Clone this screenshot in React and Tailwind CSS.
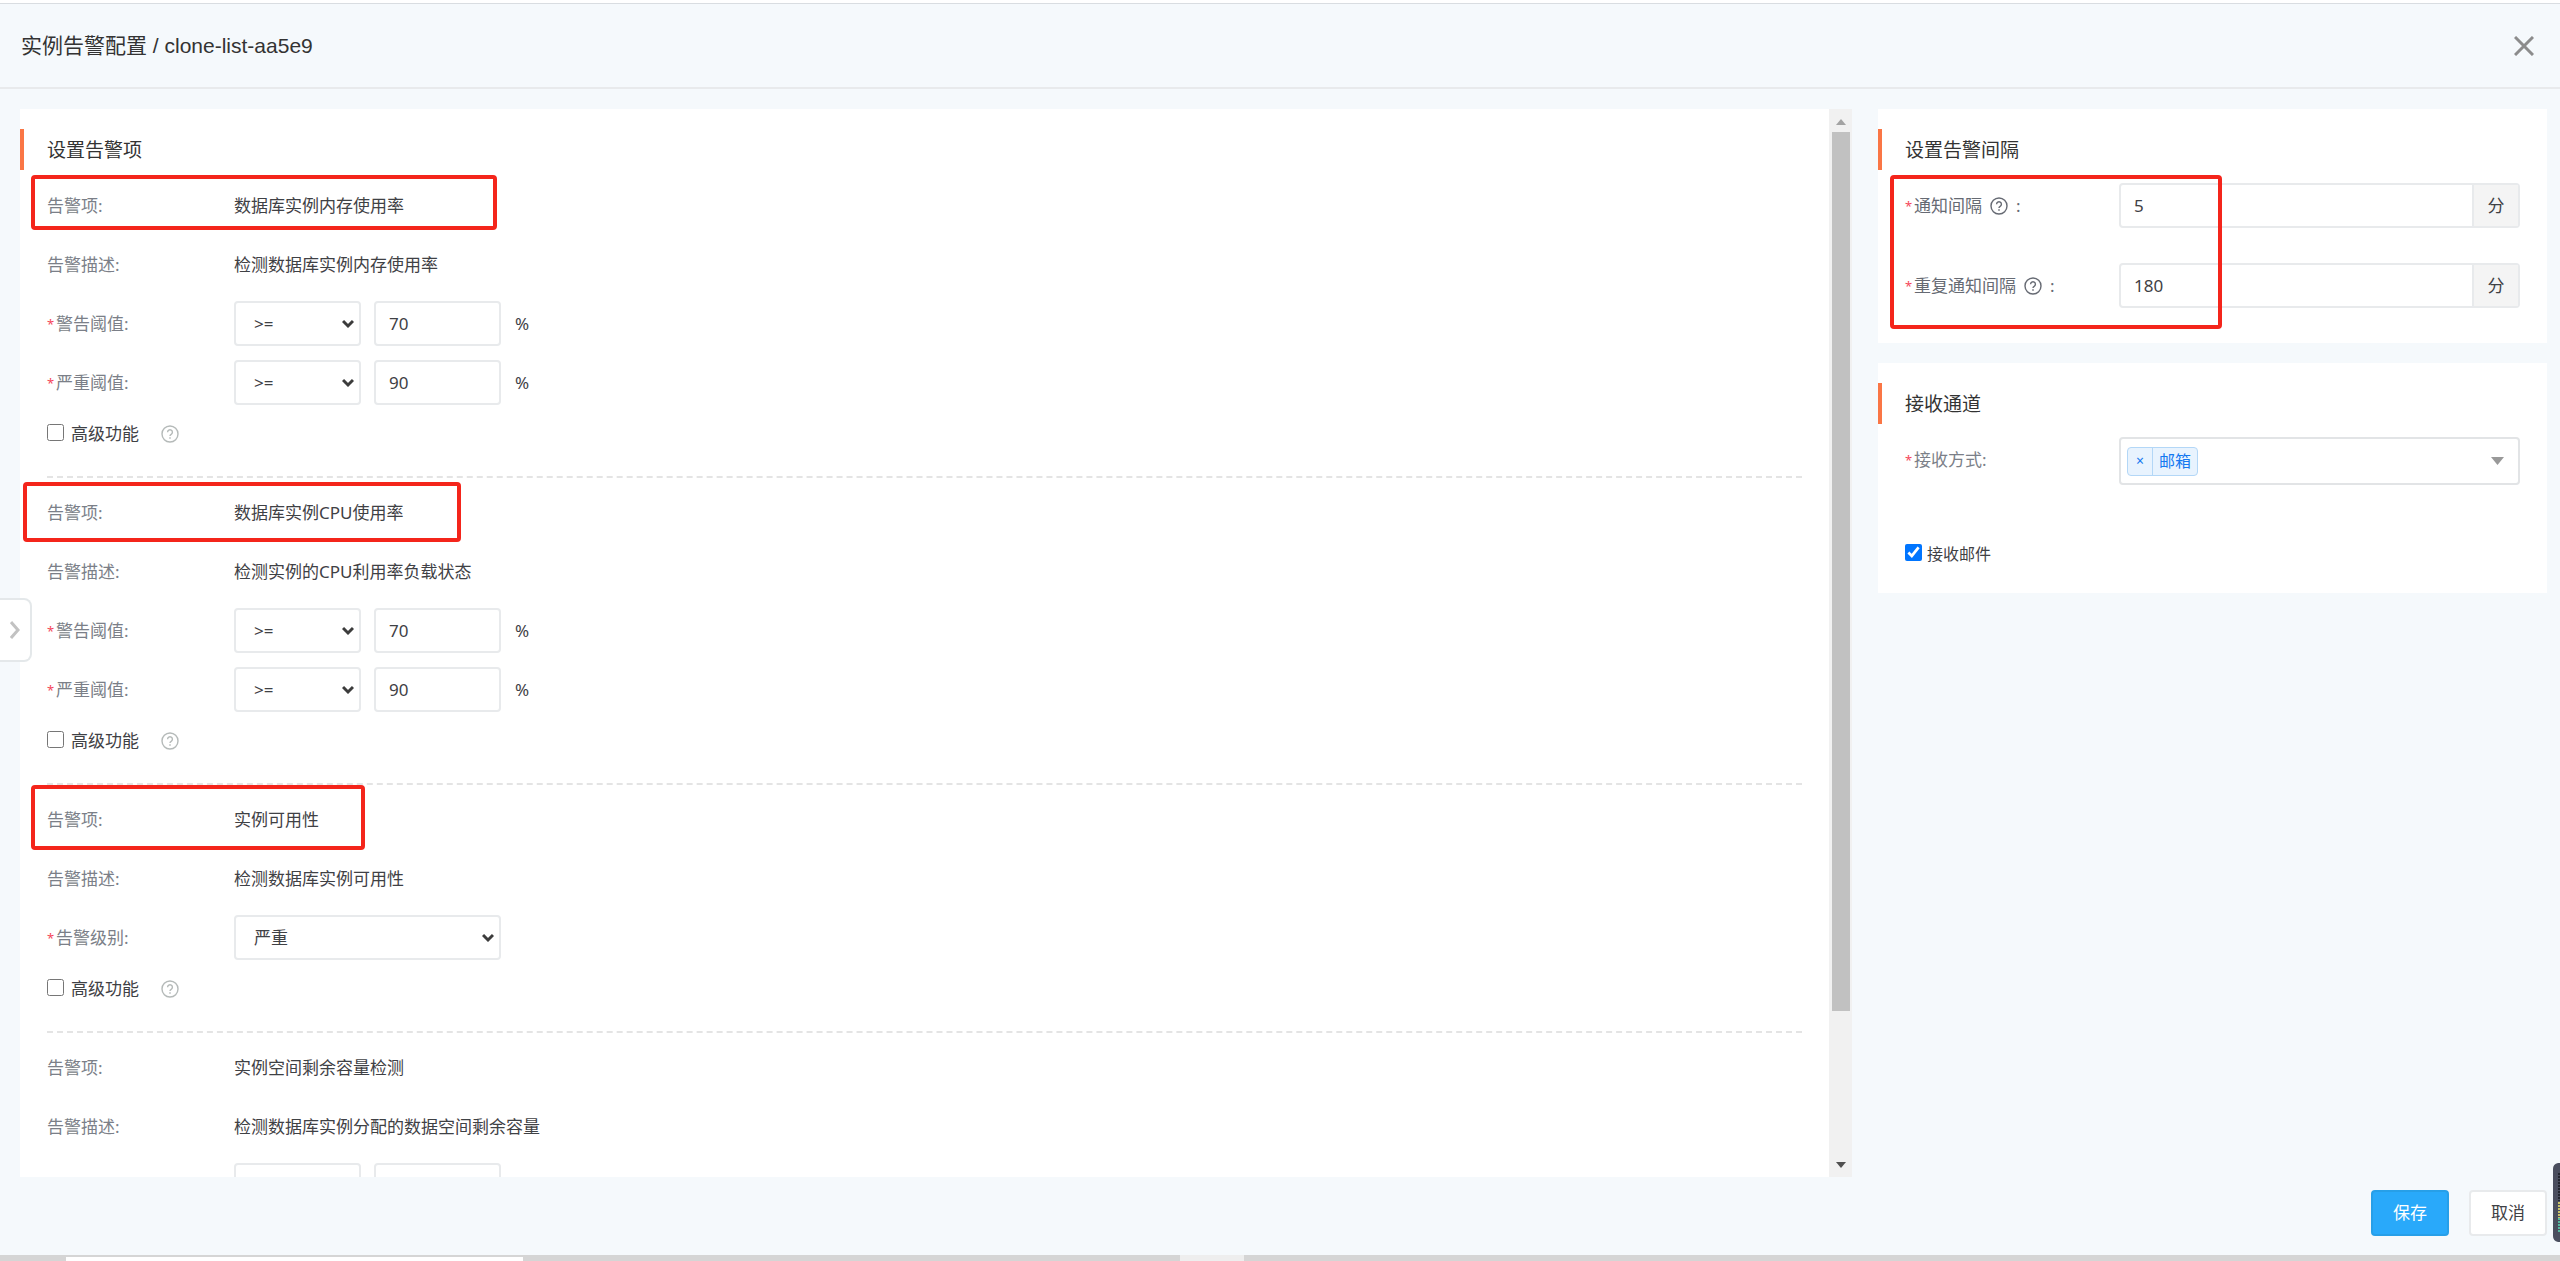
import { useState } from 'react'

const metrics = [
  {
    id: 'memory',
    name: '数据库实例内存使用率',
    desc: '检测数据库实例内存使用率',
    warning: '70',
    critical: '90',
    highlight: '-left-4 -top-2 w-[466px] h-[55px]',
  },
  {
    id: 'cpu',
    name: '数据库实例CPU使用率',
    desc: '检测实例的CPU利用率负载状态',
    warning: '70',
    critical: '90',
    highlight: '-left-6 -top-2 w-[438px] h-[60px]',
  },
  {
    id: 'availability',
    name: '实例可用性',
    desc: '检测数据库实例可用性',
    level: '严重',
    highlight: '-left-4 -top-3 w-[334px] h-[65px]',
  },
  {
    id: 'space',
    name: '实例空间剩余容量检测',
    desc: '检测数据库实例分配的数据空间剩余容量',
    warning: '20',
    critical: '10',
  },
]

function Highlight({ className }) {
  return <div className={`absolute z-10 rounded border-4 border-[#f4251b] pointer-events-none ${className}`} />
}

function HelpIcon({ className }) {
  return (
    <svg className={`w-[18px] h-[18px] shrink-0 ${className}`} viewBox="0 0 18 18" fill="none" stroke="currentColor">
      <circle cx="9" cy="9" r="8" strokeWidth="1.4" />
      <path d="M6.6 7.2a2.4 2.4 0 1 1 3.6 2.1c-.8.5-1.2.9-1.2 1.7" strokeWidth="1.4" />
      <path d="M9 12.2v1.6" strokeWidth="1.5" />
    </svg>
  )
}

function CardTitle({ children }) {
  return (
    <h2 className="h-[41px] mb-[13px] pl-[23px] border-l-4 border-[#fa7645] flex items-center text-[19px] text-[#333]">
      {children}
    </h2>
  )
}

function Required() {
  return <span className="w-[9px] text-[13px] text-[#f5475b]">*</span>
}

function Label({ htmlFor, required, children }) {
  return (
    <label htmlFor={htmlFor} className="w-[187px] shrink-0 flex items-center text-[#7b7f88]">
      {required && <Required />}
      {children}
    </label>
  )
}

function Select({ id, className, options, value, label }) {
  const [current, setCurrent] = useState(value)
  return (
    <div className={`relative h-[45px] ${className}`}>
      <select
        id={id}
        aria-label={label}
        value={current}
        onChange={(e) => setCurrent(e.target.value)}
        className="w-full h-full pl-[18px] appearance-none border-2 border-[#e8eaec] rounded-sm bg-white"
      >
        {options.map((o) => <option key={o}>{o}</option>)}
      </select>
      <svg className="absolute right-[7px] top-[18px] w-3 h-[10px] pointer-events-none" viewBox="0 0 12 10" fill="none" stroke="#3c3c3c" strokeWidth="3">
        <path d="M1 2l5 5 5-5" />
      </svg>
    </div>
  )
}

function ThresholdRow({ id, label, value }) {
  return (
    <div className="flex items-center h-[45px]">
      <Label htmlFor={id} required>{label}</Label>
      <Select id={`${id}-op`} label="比较条件" className="w-[127px] mr-[13px]" options={['>=', '<=']} value=">=" />
      <input id={id} defaultValue={value} className="w-[127px] h-[45px] px-[13px] mr-[14px] border-2 border-[#e8eaec] rounded-sm" />
      %
    </div>
  )
}

function MetricSection({ metric }) {
  return (
    <section className="relative mb-3 border-b-2 border-dashed border-[#e4e4e4] pb-[27px]">
      {metric.highlight && <Highlight className={metric.highlight} />}
      <div className="flex flex-col gap-[14px]">
        <div className="flex items-center h-[45px]">
          <Label>告警项:</Label>
          <span>{metric.name}</span>
        </div>
        <div className="flex items-center h-[45px]">
          <Label>告警描述:</Label>
          <span>{metric.desc}</span>
        </div>
        {metric.level ? (
          <div className="flex items-center h-[45px]">
            <Label htmlFor={`${metric.id}-level`} required>告警级别:</Label>
            <Select id={`${metric.id}-level`} className="w-[267px]" options={['严重', '警告']} value={metric.level} />
          </div>
        ) : (
          <>
            <ThresholdRow id={`${metric.id}-warning`} label="警告阈值:" value={metric.warning} />
            <ThresholdRow id={`${metric.id}-critical`} label="严重阈值:" value={metric.critical} />
          </>
        )}
        <div className="flex items-center h-[30px]">
          <label className="flex items-center gap-[7px]">
            <input type="checkbox" className="w-[17px] h-[17px] mb-1" />
            高级功能
          </label>
          <HelpIcon className="ml-[22px] text-[#b5bab9]" />
        </div>
      </div>
    </section>
  )
}

function IntervalRow({ id, label, value }) {
  return (
    <div className="flex items-center h-[45px]">
      <label htmlFor={id} className="w-[214px] shrink-0 flex items-center text-[#666a73]">
        <Required />
        {label}
        <HelpIcon className="mx-2" />
        :
      </label>
      <div className="flex flex-1 h-full border-2 border-[#e8eaec] rounded-sm">
        <input id={id} defaultValue={value} className="flex-1 min-w-0 px-[13px]" />
        <span className="w-[46px] flex items-center justify-center bg-[#f4f4f4] border-l-2 border-[#e8eaec]">分</span>
      </div>
    </div>
  )
}

function Scrollbar() {
  return (
    <div className="w-[23px] shrink-0 flex flex-col items-center bg-[#f1f1f1]">
      <svg className="w-[10px] h-[23px]" viewBox="0 0 10 23" fill="#a3a3a3"><path d="M5 10l5 6H0z" /></svg>
      <div className="flex-1 w-[18px]">
        <div className="w-full h-[86%] bg-[#c1c1c1]" />
      </div>
      <svg className="w-[10px] h-[23px]" viewBox="0 0 10 23" fill="#505050"><path d="M0 8h10l-5 6z" /></svg>
    </div>
  )
}

export default function App() {
  return (
    <div className="relative h-screen overflow-hidden flex flex-col bg-[#f5f9fc] text-[17px] leading-6 text-[#3f4145] font-['Noto_Sans','Noto_Sans_CJK_SC',sans-serif]">
      <div className="h-1 shrink-0 bg-white border-b border-[#d9dde1]" />
      <header className="h-[85px] shrink-0 flex items-center justify-between pl-[21px] pr-[26px] border-b-2 border-[#e8eaec]">
        <h1 className="text-[21px] text-[#333] font-['Liberation_Sans','Noto_Sans_CJK_SC',sans-serif]">实例告警配置 / clone-list-aa5e9</h1>
        <button aria-label="关闭">
          <svg className="w-5 h-5" viewBox="0 0 20 20" stroke="#8c8c8c" strokeWidth="3"><path d="M1 1l18 18M19 1L1 19" /></svg>
        </button>
      </header>

      <main className="flex-1 min-h-0 grid grid-cols-[1832fr_669fr] grid-rows-[minmax(0,1fr)] gap-[26px] pl-5 pr-[13px] pt-5">
        <div className="flex min-h-0 bg-white overflow-hidden">
          <div className="flex-1 min-w-0 overflow-hidden pt-5">
            <CardTitle>设置告警项</CardTitle>
            <div className="px-[27px]">
              {metrics.map((m) => <MetricSection key={m.id} metric={m} />)}
            </div>
          </div>
          <Scrollbar />
        </div>

        <div className="flex flex-col gap-5">
          <div className="bg-white pt-5 pb-[35px]">
            <CardTitle>设置告警间隔</CardTitle>
            <div className="relative px-[27px] flex flex-col gap-[35px]">
              <Highlight className="left-3 -top-2 w-[332px] h-[154px]" />
              <IntervalRow id="notify" label="通知间隔" value="5" />
              <IntervalRow id="repeat" label="重复通知间隔" value="180" />
            </div>
          </div>

          <div className="bg-white pt-5 pb-[27px]">
            <CardTitle>接收通道</CardTitle>
            <div className="px-[27px]">
              <div className="flex">
                <span className="w-[214px] h-[45px] shrink-0 flex items-center text-[#7b7f88]">
                  <Required />
                  接收方式:
                </span>
                <div className="flex-1 h-12 pl-[6px] pr-[14px] flex items-center justify-between border-2 border-[#e2e4e6] rounded-sm">
                  <span className="h-[29px] flex items-center border border-[#b3d7f7] rounded-sm bg-[#e8f3fe] text-[#1478f0] text-base">
                    <button aria-label="移除邮箱" className="w-[25px] h-full flex items-center justify-center border-r border-[#b3d7f7] text-sm">×</button>
                    <span className="px-[6px]">邮箱</span>
                  </span>
                  <svg className="w-[13px] h-2" viewBox="0 0 13 8" fill="#999"><path d="M0 0h13L6.500 8z" /></svg>
                </div>
              </div>
              <label className="mt-[57px] flex items-center gap-[5px] text-base">
                <input type="checkbox" defaultChecked className="w-[17px] h-[17px] mb-1" />
                接收邮件
              </label>
            </div>
          </div>
        </div>
      </main>

      <footer className="h-[78px] shrink-0 flex items-start justify-end gap-5 pt-[13px] pr-[13px]">
        <button className="w-[78px] h-[46px] rounded-sm border-2 border-[#279fe8] bg-[#29a9fa] text-white">保存</button>
        <button className="w-[78px] h-[46px] rounded-sm border-2 border-[#e8eaec] bg-white">取消</button>
      </footer>

      <div className="h-[6px] shrink-0 flex bg-[#d5d5d5]">
        <div className="ml-[66px] mt-[2px] w-[457px] bg-white" />
        <div className="ml-[657px] w-16 bg-[#eeeeee]" />
      </div>

      <button aria-label="展开" className="absolute left-0 top-[598px] w-8 h-16 pl-[10px] bg-white border-2 border-l-0 border-[#e4e8ea] rounded-r-lg">
        <svg className="w-[10px] h-[18px]" viewBox="0 0 10 18" fill="none" stroke="#c2c2c2" strokeWidth="3"><path d="M1 1l7 8-7 8" /></svg>
      </button>

      {/* level meter peeking in from the right edge */}
      <svg className="absolute right-0 top-[1163px] w-[7px] h-[79px]" viewBox="0 0 7 79">
        <path d="M7 0H5Q0 1 0 6v67q0 5 5 6h2z" fill="#4a4e5e" />
        <path d="M6 10v28" stroke="#23262f" strokeWidth="2" strokeDasharray="2 1" />
        <path d="M6 39v16" stroke="#c9c46a" strokeWidth="2" strokeDasharray="2 1" />
        <path d="M6 55v15" stroke="#56b9a0" strokeWidth="2" strokeDasharray="2 1" />
      </svg>
    </div>
  )
}
